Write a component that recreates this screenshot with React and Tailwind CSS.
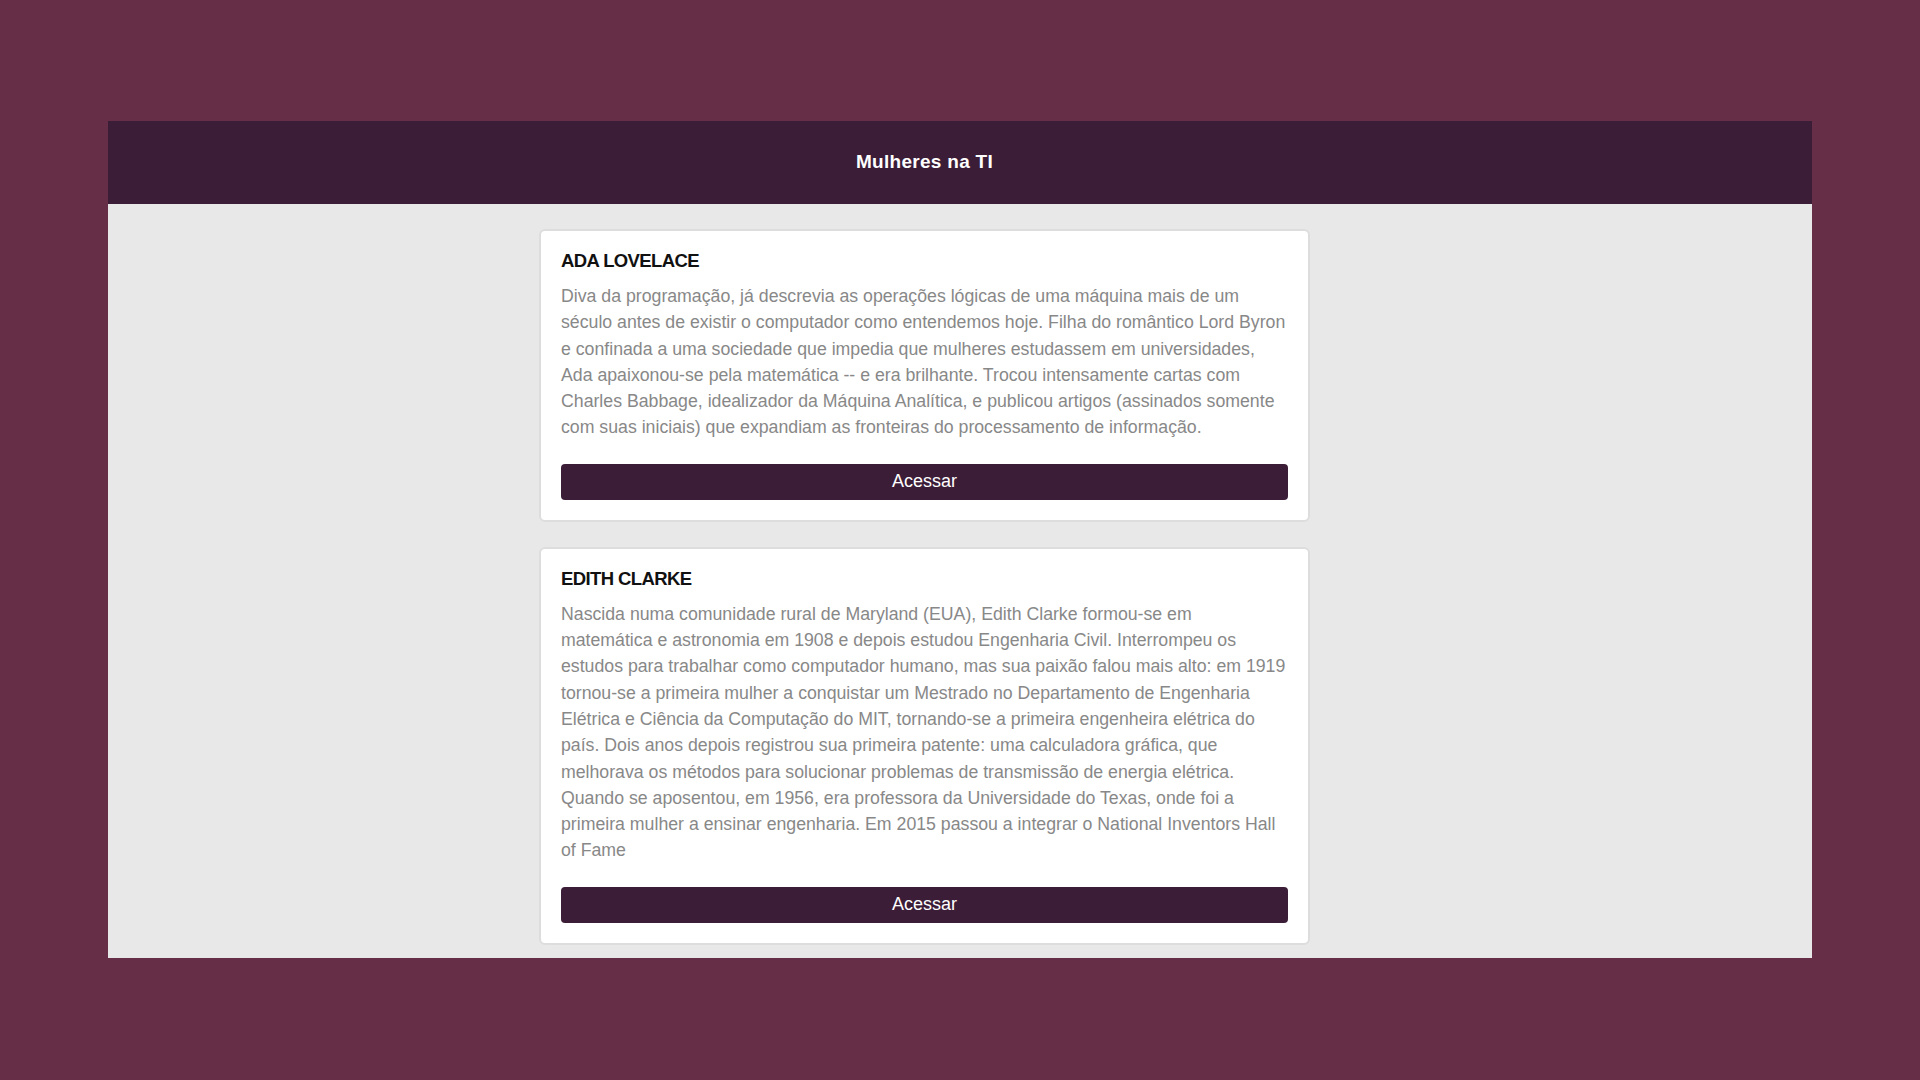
const WOMEN = [
  {
    name: 'ADA LOVELACE',
    bio: 'Diva da programação, já descrevia as operações lógicas de uma máquina mais de um século antes de existir o computador como entendemos hoje. Filha do romântico Lord Byron e confinada a uma sociedade que impedia que mulheres estudassem em universidades, Ada apaixonou-se pela matemática -- e era brilhante. Trocou intensamente cartas com Charles Babbage, idealizador da Máquina Analítica, e publicou artigos (assinados somente com suas iniciais) que expandiam as fronteiras do processamento de informação.',
  },
  {
    name: 'EDITH CLARKE',
    bio: 'Nascida numa comunidade rural de Maryland (EUA), Edith Clarke formou-se em matemática e astronomia em 1908 e depois estudou Engenharia Civil. Interrompeu os estudos para trabalhar como computador humano, mas sua paixão falou mais alto: em 1919 tornou-se a primeira mulher a conquistar um Mestrado no Departamento de Engenharia Elétrica e Ciência da Computação do MIT, tornando-se a primeira engenheira elétrica do país. Dois anos depois registrou sua primeira patente: uma calculadora gráfica, que melhorava os métodos para solucionar problemas de transmissão de energia elétrica. Quando se aposentou, em 1956, era professora da Universidade do Texas, onde foi a primeira mulher a ensinar engenharia. Em 2015 passou a integrar o National Inventors Hall of Fame',
  },
];

function Card({ name, bio }) {
  return (
    <div className="w-[771px] bg-white border-2 border-[#dddddd] rounded-[6px] px-[20px] pt-[18px] pb-[20px]">
      <h2 className="text-[18.5px] leading-[24px] font-bold tracking-[-0.6px] text-[#111111]">{name}</h2>
      <p className="mt-[10px] text-[17.72px] leading-[26.3px] text-[#888888]">{bio}</p>
      <button className="mt-[23px] w-full h-[36px] rounded-[4px] bg-[#3b1d38] text-white text-[18px]">
        Acessar
      </button>
    </div>
  );
}

export default function App() {
  return (
    <div className="w-[1920px] h-[1080px] bg-[#672f47] pt-[121px] px-[108px] font-['Liberation_Sans',Arial,sans-serif]">
      <div className="h-[837px] bg-[#e8e8e8] flex flex-col overflow-hidden">
        {/* Header */}
        <header className="h-[83px] shrink-0 bg-[#3b1d38] flex items-center justify-center pr-[71px]">
          <h1 className="text-white text-[19px] font-bold tracking-[0.3px]">Mulheres na TI</h1>
        </header>

        {/* Cards */}
        <main className="flex flex-col items-center gap-[25px] pt-[25px] pr-[71px]">
          {WOMEN.map(w => <Card key={w.name} {...w} />)}
        </main>
      </div>
    </div>
  );
}
